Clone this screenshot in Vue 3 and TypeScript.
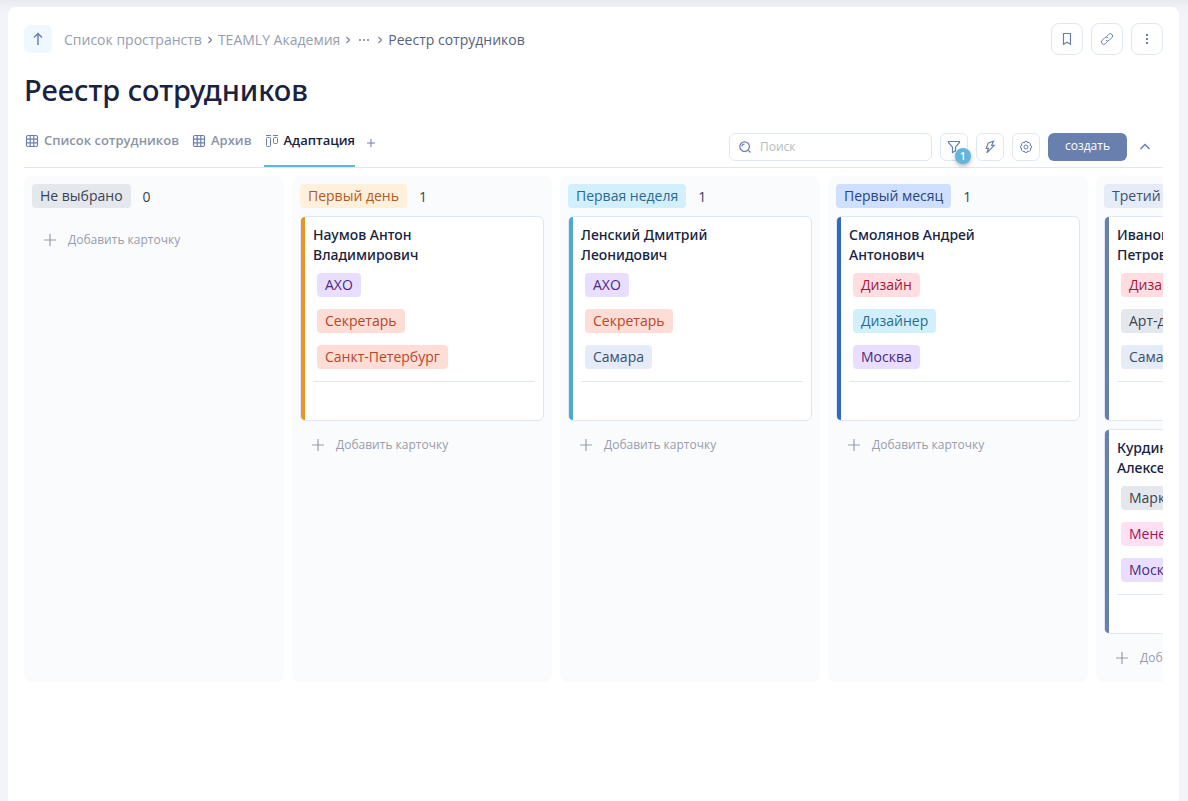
<script setup lang="ts">
type Tone = 'gray' | 'orange' | 'cyan' | 'blue' | 'steel' | 'violet' | 'coral' | 'red' | 'pink'

interface Tag {
  text: string
  tone: Tone
}

interface Card {
  name: string
  tags: Tag[]
}

interface Column {
  title: string
  tone: Tone
  cards: Card[]
}

const crumbs: string[] = ['Список пространств', 'TEAMLY Академия']

const tabs = [
  { title: 'Список сотрудников', kind: 'table', active: false },
  { title: 'Архив', kind: 'table', active: false },
  { title: 'Адаптация', kind: 'board', active: true },
]

const columns: Column[] = [
  { title: 'Не выбрано', tone: 'gray', cards: [] },
  {
    title: 'Первый день',
    tone: 'orange',
    cards: [
      {
        name: 'Наумов Антон Владимирович',
        tags: [
          { text: 'АХО', tone: 'violet' },
          { text: 'Секретарь', tone: 'coral' },
          { text: 'Санкт-Петербург', tone: 'coral' },
        ],
      },
    ],
  },
  {
    title: 'Первая неделя',
    tone: 'cyan',
    cards: [
      {
        name: 'Ленский Дмитрий Леонидович',
        tags: [
          { text: 'АХО', tone: 'violet' },
          { text: 'Секретарь', tone: 'coral' },
          { text: 'Самара', tone: 'steel' },
        ],
      },
    ],
  },
  {
    title: 'Первый месяц',
    tone: 'blue',
    cards: [
      {
        name: 'Смолянов Андрей Антонович',
        tags: [
          { text: 'Дизайн', tone: 'red' },
          { text: 'Дизайнер', tone: 'cyan' },
          { text: 'Москва', tone: 'violet' },
        ],
      },
    ],
  },
  {
    title: 'Третий месяц',
    tone: 'steel',
    cards: [
      {
        name: 'Иванов Сергей Петрович',
        tags: [
          { text: 'Дизайн', tone: 'red' },
          { text: 'Арт-директор', tone: 'gray' },
          { text: 'Самара', tone: 'steel' },
        ],
      },
      {
        name: 'Курдин Максим Алексеевич',
        tags: [
          { text: 'Маркетинг', tone: 'gray' },
          { text: 'Менеджер', tone: 'pink' },
          { text: 'Москва', tone: 'violet' },
        ],
      },
    ],
  },
]
</script>

<template>
  <div class="page">
    <main class="panel">
      <header class="top">
        <button class="up" type="button" aria-label="Наверх">
          <svg class="bold" width="16" height="16" viewBox="0 0 16 16"><path d="M8 14V2.500M4 6.500l4-4 4 4" /></svg>
        </button>
        <nav class="crumbs" aria-label="Путь">
          <template v-for="crumb in crumbs" :key="crumb">
            <a href="#">{{ crumb }}</a>
            <svg class="sep" width="6" height="8" viewBox="0 0 6 8"><path d="M1.500 1l3 3-3 3" /></svg>
          </template>
          <button class="more" type="button" aria-label="Ещё">
            <svg width="12" height="4" viewBox="0 0 12 4"><path d="M1 1h2v2H1zM5 1h2v2H5zM9 1h2v2H9z" /></svg>
          </button>
          <svg class="sep" width="6" height="8" viewBox="0 0 6 8"><path d="M1.500 1l3 3-3 3" /></svg>
          <span class="current">Реестр сотрудников</span>
        </nav>
        <div class="actions">
          <button class="square" type="button" aria-label="В закладки">
            <svg width="16" height="16" viewBox="0 0 16 16"><path d="M4.500 2.500h7v10.700L8 11.200l-3.500 2z" /></svg>
          </button>
          <button class="square" type="button" aria-label="Ссылка">
            <svg class="thin" width="16" height="16" viewBox="0 0 16 16">
              <path d="M7 9.200a2.300 2.300 0 0 0 3.300 0l2.600-2.600a2.300 2.300 0 0 0-3.300-3.300L7.400 5.500" />
              <path d="M9 6.800a2.300 2.300 0 0 0-3.300 0L3.100 9.400a2.300 2.300 0 0 0 3.300 3.300l2.200-2.200" />
            </svg>
          </button>
          <button class="square" type="button" aria-label="Меню">
            <svg class="filled" width="16" height="16" viewBox="0 0 16 16">
              <path d="M7 3h2v2H7zM7 7h2v2H7zM7 11h2v2H7z" />
            </svg>
          </button>
        </div>
      </header>

      <h1>Реестр сотрудников</h1>

      <div class="bar">
        <nav class="tabs" aria-label="Представления">
          <a v-for="tab in tabs" :key="tab.title" href="#" class="tab" :class="{ active: tab.active }">
            <svg v-if="tab.kind === 'table'" width="16" height="16" viewBox="0 0 16 16">
              <rect x="2.500" y="2.500" width="11" height="11" rx="1.500" />
              <path d="M6.200 2.500v11M9.800 2.500v11M2.500 6.200h11M2.500 9.800h11" />
            </svg>
            <svg v-else class="thin" width="16" height="16" viewBox="0 0 16 16">
              <path d="M2 2.500h5M9 2.500h5" />
              <rect x="2.500" y="4.500" width="4" height="9" rx="1" />
              <rect x="9.500" y="4.500" width="4" height="6" rx="1" />
            </svg>
            <span>{{ tab.title }}</span>
          </a>
          <button class="add-tab" type="button" aria-label="Добавить представление">
            <svg class="thin" width="10" height="10" viewBox="0 0 10 10"><path d="M5 1v8M1 5h8" /></svg>
          </button>
        </nav>

        <div class="tools">
          <label class="search">
            <svg width="16" height="16" viewBox="0 0 16 16">
              <circle cx="7.600" cy="7.600" r="4.800" />
              <path d="M11.500 11.500l2 2M5 7.500a2.600 2.600 0 0 1 2.500-2.500" />
            </svg>
            <input type="search" placeholder="Поиск" aria-label="Поиск" />
          </label>
          <button class="tool" type="button" aria-label="Фильтр, 1 условие">
            <svg width="16" height="16" viewBox="0 0 16 16">
              <path d="M2.500 2.500h11v1L9.500 8.200v3.600l-3 1.700V8.200l-4-4.700z" />
            </svg>
            <span class="badge">1</span>
          </button>
          <button class="tool" type="button" aria-label="Автоматизация">
            <svg width="16" height="16" viewBox="0 0 16 16">
              <path d="M6.200 4L11.500 2.200 9.600 6.300h2.600L4.800 13.800l1.700-4.400H4.200z" />
            </svg>
          </button>
          <button class="tool" type="button" aria-label="Настройки">
            <svg class="thin" width="16" height="16" viewBox="0 0 16 16">
              <path d="M6.900 2.500h2.200l.5 1.300 1.500-.5 1.500 1.500-.5 1.500 1.300.6v2.200l-1.300.5.5 1.500-1.500 1.500-1.500-.5-.5 1.300H6.900l-.5-1.300-1.500.5-1.500-1.500.5-1.500-1.300-.5V6.900l1.300-.6-.5-1.500 1.500-1.500 1.500.5z" />
              <circle cx="8" cy="8" r="2" />
            </svg>
          </button>
          <button class="create" type="button">создать</button>
          <button class="collapse" type="button" aria-label="Свернуть">
            <svg class="bold" width="12" height="12" viewBox="0 0 12 12"><path d="M1.500 8L6 3.500 10.500 8" /></svg>
          </button>
        </div>
      </div>

      <div class="board">
        <section v-for="column in columns" :key="column.title" class="column">
          <header class="column-head">
            <h2 class="chip" :class="column.tone">{{ column.title }}</h2>
            <span class="count">{{ column.cards.length }}</span>
          </header>
          <div class="cards">
            <article v-for="card in column.cards" :key="card.name" class="card" :class="'edge-' + column.tone">
              <h3>{{ card.name }}</h3>
              <ul class="tags">
                <li v-for="tag in card.tags" :key="tag.text" class="chip" :class="tag.tone">{{ tag.text }}</li>
              </ul>
              <div class="card-foot"></div>
            </article>
          </div>
          <button class="add-card" type="button">
            <svg width="12" height="12" viewBox="0 0 12 12"><path d="M6 0v12M0 6h12" /></svg>
            Добавить карточку
          </button>
        </section>
      </div>
    </main>
  </div>
</template>

<style>
body {
  margin: 0;
  background: #f3f4f9;
}
</style>

<style scoped>
.page {
  box-sizing: border-box;
  min-height: 100vh;
  display: flex;
  padding: 7px 9px 0 8px;
  background: linear-gradient(#e9eaef, #f1f2f7 8px, #f3f4f9 16px);
  font-family: "Open Sans", "Noto Sans", sans-serif;
  font-size: 14px;
  line-height: 20px;
  color: #172340;
}

.panel {
  flex: 1;
  min-width: 0;
  padding: 16px;
  background: #fff;
  border-radius: 8px 8px 0 0;
}

button {
  display: flex;
  align-items: center;
  justify-content: center;
  flex-shrink: 0;
  padding: 0;
  border: 0;
  background: none;
  font: inherit;
  color: inherit;
  cursor: pointer;
}

a {
  color: inherit;
  text-decoration: none;
}

svg {
  flex-shrink: 0;
  fill: none;
  stroke: #6980ae;
  stroke-width: 1.200;
}

.bold {
  stroke-width: 1.500;
}

.thin {
  stroke-width: 1;
}

.top {
  display: flex;
  align-items: center;
}

.up {
  width: 28px;
  height: 28px;
  border-radius: 6px;
  background: #eff8ff;
}

.crumbs {
  flex: 1;
  display: flex;
  align-items: center;
  gap: 5px;
  margin-left: 12px;
  padding-top: 1px;
  color: #969dad;
}

.sep {
  stroke: #7a8299;
}

.more {
  width: 16px;
  height: 20px;
}

.more svg {
  fill: #969dad;
  stroke: none;
}

.current {
  color: #55617a;
}

.actions {
  display: flex;
  gap: 8px;
}

.square {
  box-sizing: border-box;
  width: 32px;
  height: 32px;
  border: 1px solid #dfe7f5;
  border-radius: 8px;
}

.filled {
  fill: #6980ae;
  stroke: none;
}

h1 {
  margin: 16px 0 0;
  font-family: "Noto Sans", "Open Sans", sans-serif;
  font-size: 29px;
  line-height: 38px;
  font-weight: 500;
}

.bar {
  display: flex;
  justify-content: space-between;
  margin-top: 18px;
  border-bottom: 1px solid #dfe7f2;
}

.tabs {
  display: flex;
  gap: 12px;
}

.tab {
  box-sizing: border-box;
  display: flex;
  gap: 4px;
  height: 40px;
  padding-top: 4px;
  border-bottom: 2px solid transparent;
  font-size: 13px;
  font-weight: 600;
  line-height: 18px;
  color: #8a94a6;
}

.tab svg {
  margin-top: 2px;
}

.tab.active {
  border-color: #62b5dd;
  color: #172340;
}

.add-tab {
  width: 8px;
  height: 32px;
}

.tools {
  display: flex;
  align-items: center;
  gap: 8px;
}

.search {
  box-sizing: border-box;
  display: flex;
  align-items: center;
  gap: 7px;
  width: 203px;
  height: 28px;
  padding: 0 7px;
  border: 1px solid #dfe7f5;
  border-radius: 6px;
}

.search input {
  flex: 1;
  min-width: 0;
  padding: 0;
  border: 0;
  outline: 0;
  background: none;
  font: inherit;
  font-size: 12px;
}

.search input::placeholder {
  color: #b4bcc2;
}

.tool {
  position: relative;
  box-sizing: border-box;
  width: 28px;
  height: 28px;
  border: 1px solid #dfe7f5;
  border-radius: 6px;
}

.badge {
  position: absolute;
  right: -4px;
  bottom: -4px;
  width: 16px;
  height: 16px;
  border-radius: 8px;
  background: #62b5dd;
  box-shadow: 0 2px 4px rgb(0 0 0 / 30%);
  font-size: 10px;
  font-weight: 600;
  line-height: 16px;
  text-align: center;
  color: #fff;
}

.create {
  height: 28px;
  padding: 0 17px 2px;
  border-radius: 6px;
  background: #6980ae;
  font-size: 12px;
  color: #fff;
}

.collapse {
  width: 20px;
  height: 28px;
  margin-right: 8px;
}

.board {
  display: flex;
  gap: 8px;
  margin-top: 8px;
  overflow-x: auto;
  scrollbar-width: none;
}

.column {
  box-sizing: border-box;
  flex: 0 0 260px;
  padding: 8px 8px 0;
  border-radius: 8px;
  background: #fafbfd;
}

.column-head {
  display: flex;
  align-items: center;
  gap: 12px;
  margin-bottom: 8px;
}

.chip {
  margin: 0;
  padding: 2px 8px;
  border-radius: 4px;
  font-size: 14px;
  font-weight: 400;
  line-height: 20px;
  white-space: nowrap;
}

.count {
  padding-top: 2px;
  color: #3a4254;
}

.cards {
  display: flex;
  flex-direction: column;
  gap: 8px;
}

.card {
  position: relative;
  padding: 8px 8px 0 12px;
  border: 1px solid #dfe7f5;
  border-radius: 6px;
  background: #fff;
}

.card::before {
  content: "";
  position: absolute;
  inset: 0 auto 0 0;
  width: 4px;
  border-radius: 4px 0 0 4px;
  background: currentColor;
}

h3 {
  max-width: 160px;
  margin: 0 0 8px;
  font-family: "Noto Sans", "Open Sans", sans-serif;
  font-size: 14px;
  font-weight: 500;
  line-height: 20px;
  color: #172340;
}

.tags {
  display: flex;
  flex-direction: column;
  align-items: flex-start;
  gap: 12px;
  margin: 0;
  padding: 0 4px;
  list-style: none;
}

.card-foot {
  height: 38px;
  margin-top: 12px;
  border-top: 1px solid #dfe7f5;
}

.add-card {
  gap: 12px;
  height: 48px;
  padding-left: 12px;
  font-size: 12px;
  color: #969dad;
}

.add-card svg {
  stroke: #969dad;
}

.gray { background: #e4e8ec; color: #3a4254; }
.orange { background: #fff0dc; color: #b55a22; }
.cyan { background: #d2effc; color: #2a6a92; }
.blue { background: #cfdfff; color: #274583; }
.steel { background: #e5ebf7; color: #3a4f72; }
.violet { background: #e9deff; color: #4a2a7c; }
.coral { background: #ffddd7; color: #b5472a; }
.red { background: #ffdde0; color: #a8143a; }
.pink { background: #ffdff2; color: #9a1560; }

.edge-orange { color: #ec9524; }
.edge-cyan { color: #4faad2; }
.edge-blue { color: #3068c8; }
.edge-steel { color: #6980ae; }
</style>
